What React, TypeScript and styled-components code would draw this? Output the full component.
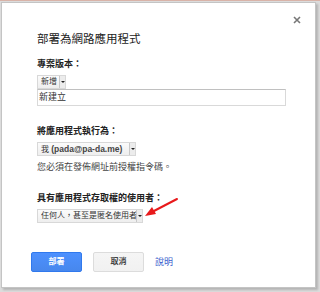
import React from "react";
import styled, { createGlobalStyle } from "styled-components";

const Global = createGlobalStyle`
  body {
    margin: 0;
    background: #e9e9e9;
    font-family: Arial, "Liberation Sans", "Noto Sans CJK TC", sans-serif;
  }
`;

const Page = styled.div`
  width: 320px;
  height: 292px;
  box-sizing: border-box;
  padding: 2px 4px 4px 1px;
  background: linear-gradient(#d9b3a8 0 1px, #dcdcdc 1px);
`;

const Dialog = styled.div`
  position: relative;
  box-sizing: border-box;
  width: 315px;
  height: 286px;
  background: #fff;
  border: 1px solid #c4c4c4;
  box-shadow: 2px 2px 2px rgba(0, 0, 0, 0.18);
  padding: 28px 30px 0 29px;
  color: #222;
`;

const Close = styled.svg`
  position: absolute;
  top: 13px;
  right: 14px;
`;

const Title = styled.h1`
  margin: 0 0 0 6px;
  font-size: 11.5px;
  font-weight: normal;
  line-height: 16px;
  height: 16px;
  color: #222;
`;

const Section = styled.div<{ $top: number }>`
  margin: ${p => p.$top}px 0 0 6px;
  display: flex;
  flex-direction: column;
  align-items: flex-start;
`;

const Label = styled.div`
  font-size: 9px;
  font-weight: bold;
  line-height: 13px;
  height: 13px;
  margin-bottom: 4px;
`;

const Select = styled.div<{ $w: number }>`
  display: flex;
  align-items: center;
  box-sizing: border-box;
  width: ${p => p.$w}px;
  height: 14px;
  line-height: 12px;
  border: 1px solid #d8d8d8;
  background: linear-gradient(#fbfbfb, #eeeeee);
  font-size: 8px;
  color: #333;
  padding-left: 3px;
  overflow: hidden;
`;

const SelectText = styled.span`
  flex: 1;
  white-space: nowrap;
  overflow: hidden;
  height: 12px;
`;

const Latin = styled.span`
  font-size: 8.5px;
  font-weight: bold;
  color: #444;
`;

const SelectBtn = styled.span`
  flex: none;
  width: 5px;
  height: 12px;
  border-left: 1px solid #c8c8c8;
  background: #ececec;
  display: flex;
  align-items: center;
  justify-content: center;
  &::after {
    content: "";
    border-left: 2px solid transparent;
    border-right: 2px solid transparent;
    border-top: 2px solid #222;
  }
`;

const Input = styled.div`
  box-sizing: border-box;
  width: 249px;
  height: 17px;
  border: 1px solid #d9d9d9;
  border-top-color: #c0c0c0;
  font-size: 9px;
  line-height: 15px;
  padding-left: 1px;
  color: #333;
`;

const Note = styled.div`
  margin-top: 5px;
  font-size: 9px;
  line-height: 13px;
  height: 13px;
  color: #444;
`;

const Buttons = styled.div`
  display: flex;
  align-items: center;
  gap: 11px;
  margin-top: 29px;
  height: 20px;
`;

const Button = styled.button<{ $primary?: boolean }>`
  width: 51px;
  height: 20px;
  box-sizing: border-box;
  border-radius: 2px;
  font-family: inherit;
  font-size: 8px;
  font-weight: bold;
  line-height: 18px;
  padding: 0;
  border: 1px solid ${p => (p.$primary ? "#3079ed" : "#dcdcdc")};
  background: ${p => (p.$primary ? "linear-gradient(#4d90fe, #4787ed)" : "linear-gradient(#f5f5f5, #f1f1f1)")};
  color: ${p => (p.$primary ? "#fff" : "#444")};
`;

const HelpLink = styled.a`
  font-size: 9px;
  line-height: 13px;
  color: #3a5fcd;
  text-decoration: none;
`;

const Arrow = styled.svg`
  position: absolute;
  left: 141px;
  top: 194px;
`;

export default function App() {
  return (
    <>
      <Global />
      <Page>
        <Dialog>
          <Close width="8" height="8" viewBox="0 0 8 8">
            <path d="M1 1L7 7M7 1L1 7" stroke="#777" strokeWidth="1.6" />
          </Close>
          <Title>部署為網路應用程式</Title>

          <Section $top={11}>
            <Label>專案版本：</Label>
            <Select $w={29}>
              <SelectText>新增</SelectText>
              <SelectBtn />
            </Select>
            <Input>新建立</Input>
          </Section>

          <Section $top={19}>
            <Label>將應用程式執行為：</Label>
            <Select $w={99}>
              <SelectText>
                我 <Latin>(pada@pa-da.me)</Latin>
              </SelectText>
              <SelectBtn />
            </Select>
            <Note>您必須在發佈網址前授權指令碼。</Note>
          </Section>

          <Section $top={18}>
            <Label>具有應用程式存取權的使用者：</Label>
            <Select $w={106}>
              <SelectText>任何人，甚至是匿名使用者</SelectText>
              <SelectBtn />
            </Select>
          </Section>

          <Buttons>
            <Button $primary>部署</Button>
            <Button>取消</Button>
            <HelpLink href="#">說明</HelpLink>
          </Buttons>

          <Arrow width="36" height="22" viewBox="0 0 36 22">
            <line x1="34" y1="2" x2="9" y2="15" stroke="#e8191b" strokeWidth="2" strokeLinecap="round" />
            <polygon points="2,19 9,10 13,17" fill="#e8191b" />
          </Arrow>
        </Dialog>
      </Page>
    </>
  );
}
